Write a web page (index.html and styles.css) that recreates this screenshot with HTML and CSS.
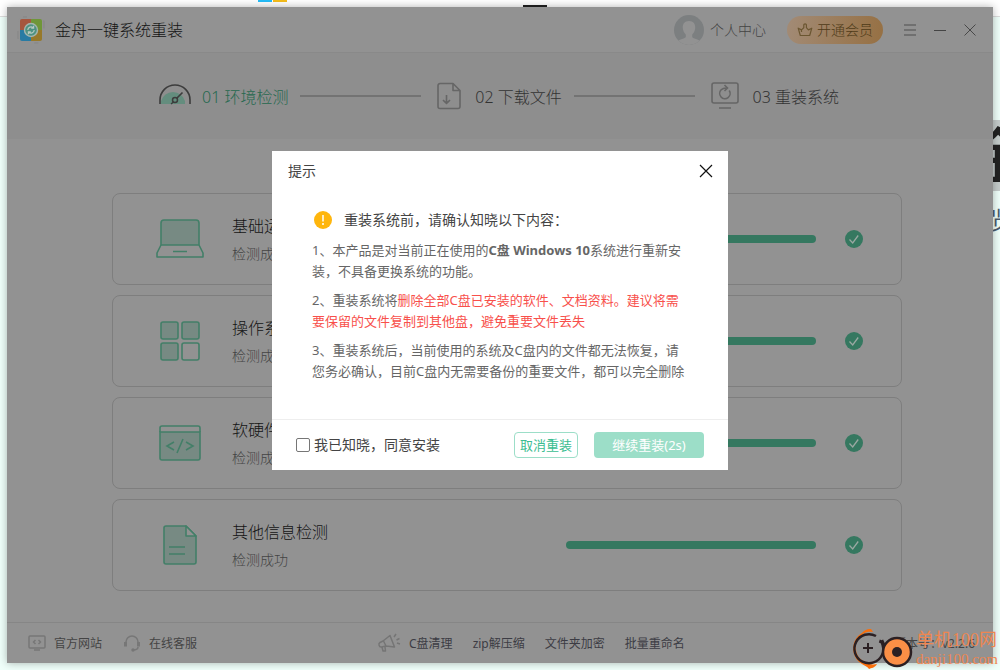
FILE: index.html
```html
<!DOCTYPE html>
<html lang="zh-CN">
<head>
<meta charset="utf-8">
<meta name="viewport" content="width=device-width, initial-scale=1">
<title>金舟一键系统重装</title>
<link rel="stylesheet" href="styles.css">
</head>
<body>
<div class="backdrop" aria-hidden="true">
  <div class="backdrop-top"><i class="tile tile-blue"></i><i class="tile tile-yellow"></i><i class="tile tile-dark"></i></div>
  <div class="backdrop-title">金</div>
  <div class="backdrop-note">览</div>
</div>

<div class="window">
  <header class="titlebar">
    <svg class="logo" width="28" height="28" viewBox="0 0 28 28">
      <rect x="1" y="1" width="26" height="26" rx="5" fill="#929292" stroke="#858585" stroke-dasharray="4 18 8 18"/>
      <path d="M3 5a2 2 0 0 1 2-2h9v11H3z" fill="#a6563e"/><path d="M14 3h9a2 2 0 0 1 2 2v9H14z" fill="#6f9638"/>
      <path d="M3 14h11v11H5a2 2 0 0 1-2-2z" fill="#287ba3"/><path d="M14 14h11v9a2 2 0 0 1-2 2h-9z" fill="#97792a"/>
      <circle cx="14" cy="14" r="6.5" fill="#4d9281" stroke="#a5b5ae" stroke-width="1.4"/>
      <path d="M10.8 14a3.2 3.2 0 0 1 5.4-2.2M17.2 14a3.2 3.2 0 0 1-5.4 2.2M16.6 9.8v2.4h-2.4M11.4 18.2v-2.4h2.4" fill="none" stroke="#b7c9c1" stroke-width="1.2"/>
    </svg>
    <h1 class="app-name">金舟一键系统重装</h1>
    <a class="account" href="#account">
      <svg width="30" height="30" viewBox="0 0 30 30"><defs><clipPath id="avatar"><circle cx="15" cy="15" r="15"/></clipPath></defs>
        <circle cx="15" cy="15" r="15" fill="#7c7f80"/><g clip-path="url(#avatar)" fill="#929292"><path d="M15 6c4.500 0 6.500 3 6.200 7-.2 3-1.400 5-3 6.400v2.400c0 2 7 2.200 8.800 5.200v3H3v-3c1.800-3 8.800-3.200 8.800-5.200v-2.400C10.200 18 9 16 8.800 13 8.500 9 10.500 6 15 6z"/></g></svg>
      <span>个人中心</span>
    </a>
    <button class="vip" type="button">
      <svg width="16" height="16" viewBox="0 0 16 16" fill="none" stroke="#6b5631" stroke-width="1.200" stroke-linejoin="round"><path d="M3.300 13.500 1.200 6.200l3.300 1.700 2.300-2.200V3.200a1.300 1.300 0 1 1 2.600 0v2.500l2 2.200 3.400-1.700-2.100 7.300zM4.500 8v2"/></svg>
      <span>开通会员</span>
    </button>
    <div class="window-controls">
      <button type="button" aria-label="菜单"><svg width="14" height="14" viewBox="0 0 14 14" stroke="#666" stroke-width="1.500"><path d="M1 2h12M1 7h12M1 12h12"/></svg></button>
      <button type="button" aria-label="最小化"><svg width="14" height="14" viewBox="0 0 14 14" stroke="#444"><path d="M1 7.500h12"/></svg></button>
      <button type="button" aria-label="关闭窗口"><svg width="14" height="14" viewBox="0 0 14 14" stroke="#484848"><path d="m1.500 1.500 11 11M12.500 1.500l-11 11"/></svg></button>
    </div>
  </header>

  <ol class="steps">
    <li class="step step-active">
      <svg width="32" height="32" viewBox="0 0 32 32"><path d="M2 24v-3a12.500 12.500 0 0 1 24 0v3z" fill="#648d7e"/><path d="M1 24v-4a15 15 0 0 1 30 0v4M17.500 18.500l6-6" fill="none" stroke="#3c3c3c" stroke-width="1.600"/><circle cx="16" cy="20" r="2.500" fill="#648d7e" stroke="#3c3c3c" stroke-width="1.500"/><path d="M14.500 22 12 24" stroke="#3c3c3c" stroke-width="1.500"/></svg>
      <span>01 环境检测</span>
    </li>
    <li class="step-line" aria-hidden="true"></li>
    <li class="step">
      <svg width="24" height="28" viewBox="0 0 24 28" fill="none" stroke="#666" stroke-width="1.600" stroke-linejoin="round"><path d="M16 1.500H3a2 2 0 0 0-2 2v21a2 2 0 0 0 2 2h18a2 2 0 0 0 2-2V8.500zM16 1.500v7h7M9.500 13v8.500M6 18l3.500 3.500L13 18"/></svg>
      <span>02 下载文件</span>
    </li>
    <li class="step-line" aria-hidden="true"></li>
    <li class="step">
      <svg width="28" height="28" viewBox="0 0 28 28" fill="none" stroke="#666" stroke-width="1.600"><rect x="1" y="1" width="26" height="20" rx="2"/><path d="M8 26h12M18.200 8.500a5.200 5.200 0 1 1-8-.7c1.300-1.300 3-1.800 5-1.800M13.500 3 16.500 6l-3 3"/></svg>
      <span>03 重装系统</span>
    </li>
  </ol>

  <main class="checks">
    <section class="check">
      <svg class="check-icon" width="48" height="48" viewBox="0 0 48 48" stroke="#437f68" stroke-width="1.600" fill="none" stroke-linejoin="round"><path d="M5 30V8a3 3 0 0 1 3-3h32a3 3 0 0 1 3 3v22z" fill="#778a83"/><path d="m5 30-4 8v4h46v-4l-4-8M17 36.500h14"/></svg>
      <div class="check-text"><h2>基础运行检测</h2><p>检测成功</p></div>
      <div class="bar"></div>
      <svg class="tick" width="18" height="18" viewBox="0 0 18 18"><circle cx="9" cy="9" r="9" fill="#357860"/><path d="m4.500 9.500 3.200 3.500 5.500-7.500" fill="none" stroke="#9aa8a2" stroke-width="1.300"/></svg>
    </section>
    <section class="check">
      <svg class="check-icon" width="48" height="48" viewBox="0 0 48 48" stroke="#437f68" stroke-width="1.600" fill="#778a83"><rect x="5" y="5" width="17" height="17" rx="2"/><rect x="26" y="5" width="17" height="17" rx="2"/><rect x="5" y="26" width="17" height="17" rx="2"/><rect x="26" y="26" width="17" height="17" rx="2" fill="none"/></svg>
      <div class="check-text"><h2>操作系统检测</h2><p>检测成功</p></div>
      <div class="bar"></div>
      <svg class="tick" width="18" height="18" viewBox="0 0 18 18"><circle cx="9" cy="9" r="9" fill="#357860"/><path d="m4.500 9.500 3.200 3.500 5.500-7.500" fill="none" stroke="#9aa8a2" stroke-width="1.300"/></svg>
    </section>
    <section class="check">
      <svg class="check-icon" width="48" height="48" viewBox="0 0 48 48" stroke="#437f68" stroke-width="1.600" fill="none"><path d="M4 13h40v26a2 2 0 0 1-2 2H6a2 2 0 0 1-2-2z" fill="#778a83"/><path d="M4 13V9a2 2 0 0 1 2-2h36a2 2 0 0 1 2 2v4M18 23l-7 4 7 4M30 23l7 4-7 4M27 20l-6 14"/></svg>
      <div class="check-text"><h2>软硬件检测</h2><p>检测成功</p></div>
      <div class="bar"></div>
      <svg class="tick" width="18" height="18" viewBox="0 0 18 18"><circle cx="9" cy="9" r="9" fill="#357860"/><path d="m4.500 9.500 3.200 3.500 5.500-7.500" fill="none" stroke="#9aa8a2" stroke-width="1.300"/></svg>
    </section>
    <section class="check">
      <svg class="check-icon" width="48" height="48" viewBox="0 0 48 48" stroke="#437f68" stroke-width="1.600" fill="#778a83" stroke-linejoin="round"><path d="M30 5H10a2 2 0 0 0-2 2v34a2 2 0 0 0 2 2h28a2 2 0 0 0 2-2V15z"/><path d="M30 5v10h10z" fill="#929292"/><path d="M13 26h16M13 33h16"/></svg>
      <div class="check-text"><h2>其他信息检测</h2><p>检测成功</p></div>
      <div class="bar"></div>
      <svg class="tick" width="18" height="18" viewBox="0 0 18 18"><circle cx="9" cy="9" r="9" fill="#357860"/><path d="m4.500 9.500 3.200 3.500 5.500-7.500" fill="none" stroke="#9aa8a2" stroke-width="1.300"/></svg>
    </section>
  </main>

  <footer class="statusbar">
    <a class="site-link" href="#site"><svg width="18" height="18" viewBox="0 0 18 18" fill="none" stroke="#777" stroke-width="1.500"><rect x="1" y="2" width="16" height="12" rx="1"/><path d="M6 16h6M7.500 6 5.500 8l2 2M10.500 6l2 2-2 2"/></svg><span>官方网站</span></a>
    <a class="site-link" href="#support"><svg width="18" height="18" viewBox="0 0 18 18" fill="none" stroke="#777" stroke-width="1.500"><path d="M3 9V8a6 6 0 0 1 12 0v1M15 13c0 2-2 3-5 3"/><path d="M2.500 8v4.500M15.500 8v4.500" stroke-width="3"/><circle cx="10" cy="16" r="1" fill="#777"/></svg><span>在线客服</span></a>
    <nav class="tools">
      <svg width="24" height="20" viewBox="0 0 24 20" fill="none" stroke="#757575" stroke-width="1.500" stroke-linejoin="round"><path d="m6 8 7-5.500 4.500 11.500L9 13M6 8 3 9.500c-2 1-1 5 1.500 4.500L9 13 6.500 8M5 14l1 4h2.500L8 14M17 4l2-3M19.500 7l3-1.500M20 10l3 1"/></svg>
      <a href="#clean">C盘清理</a><a href="#zip">zip解压缩</a><a href="#encrypt">文件夹加密</a><a href="#rename">批量重命名</a>
    </nav>
    <span class="version">版本号：v2.2.6</span>
  </footer>

  <div class="overlay">
    <div class="dialog" role="dialog" aria-modal="true" aria-labelledby="dialog-title">
      <div class="dialog-head">
        <h2 id="dialog-title">提示</h2>
        <button type="button" aria-label="关闭"><svg width="14" height="14" viewBox="0 0 14 14" stroke="#111" stroke-width="1.200"><path d="m1 1 12 12M13 1 1 13"/></svg></button>
      </div>
      <div class="dialog-body">
        <div class="notice"><svg width="18" height="18" viewBox="0 0 18 18"><circle cx="9" cy="9" r="9" fill="#ffb60d"/><path d="M9 4v6.500M9 12v2" stroke="#fff" stroke-width="1.500"/></svg><span>重装系统前，请确认知晓以下内容：</span></div>
        <p>1、本产品是对当前正在使用的<strong>C盘 Windows 10</strong>系统进行重新安装，不具备更换系统的功能。</p>
        <p>2、重装系统将<em>删除全部C盘已安装的软件、文档资料。建议将需要保留的文件复制到其他盘，避免重要文件丢失</em></p>
        <p>3、重装系统后，当前使用的系统及C盘内的文件都无法恢复，请您务必确认，目前C盘内无需要备份的重要文件，都可以完全删除</p>
      </div>
      <div class="dialog-foot">
        <input type="checkbox" id="agree"><label for="agree">我已知晓，同意安装</label>
        <button class="cancel" type="button">取消重装</button>
        <button class="confirm" type="button">继续重装(2s)</button>
      </div>
    </div>
  </div>
</div>

<div class="watermark">
  <svg width="64" height="42" viewBox="0 0 64 42" fill="none">
    <path d="M21 1c-5 0-7 2-9 4A18 18 0 0 0 12 36c3 2 5 2 7 5 2-1 6-1 8-5-5 1-9 0-12-2A16 16 0 0 1 13 6c4-3 8-2 10-2z" fill="#f96f0b"/>
    <path d="M26 8a14.500 14.500 0 1 0 6 19c3-5 1-10-1-14M32 12l4 9M31 12l-1 3M37 19l4-6" stroke="#2b2023" stroke-width="2.500"/>
    <path d="M18 15v10M13 20h10" stroke="#2b2023" stroke-width="2"/>
    <circle cx="47" cy="24" r="14" fill="#fb8f46" stroke="#2b2023" stroke-width="2.500"/><circle cx="47" cy="24" r="5" fill="#2b2023"/>
  </svg>
  <div class="watermark-text"><span>单机100网</span><small>danji100.com</small></div>
</div>
</body>
</html>
```
FILE: styles.css
```css
* { box-sizing: border-box; }

body {
  margin: 0;
  min-height: 100vh;
  padding: 7px;
  display: flex;
  position: relative;
  overflow: hidden;
  background: #effffa;
  color: #444;
  font: 300 14px/20px "Noto Sans", "Noto Sans CJK SC", sans-serif;
}

h1, h2, p, ol { margin: 0; padding: 0; font-size: inherit; font-weight: inherit; }
a { color: inherit; text-decoration: none; }
button { border: 0; padding: 0; background: none; color: inherit; font: inherit; }
svg { display: block; flex: none; }

/* Page behind the application window */
.backdrop { position: absolute; inset: 0; overflow: hidden; }
.backdrop-top { height: 17px; background: #fff; border-bottom: 1px solid #ddd; }
.tile { position: absolute; top: 0; height: 2px; width: 14px; }
.tile-blue { left: 258px; background: #25bdf9; }
.tile-yellow { left: 273px; background: #f5bd1b; }
.tile-dark { left: 523px; top: 5px; width: 24px; background: #222; }
.backdrop-title { position: absolute; top: 120px; right: -28px; background: #c5cccb; color: #222; font-size: 60px; line-height: 71px; font-weight: 500; }
.backdrop-note { position: absolute; top: 206px; right: -14px; color: #4b5c6e; font-size: 24px; line-height: 28px; font-weight: 400; }

.window {
  position: relative;
  flex: 1;
  display: flex;
  flex-direction: column;
  background: #929292;
  box-shadow: 0 0 8px rgba(0, 0, 0, .3);
}

.titlebar { display: flex; align-items: center; height: 46px; padding: 0 16px 0 10px; border-bottom: 1px solid #898989; }
.app-name { margin-left: 10px; color: #141414; font-size: 16px; }
.account { display: flex; align-items: center; gap: 6px; margin-left: auto; color: #444; }
.vip {
  display: flex; align-items: center; justify-content: center; gap: 4px;
  width: 96px; height: 28px; margin-left: 21px; border-radius: 14px;
  background: linear-gradient(100deg, #a28b76, #967043); color: #4f3b18;
}
.window-controls { display: flex; gap: 16px; margin-left: 20px; }

.steps { display: flex; align-items: center; height: 86px; padding: 0 154px 0 152px; background: #8e8e8e; list-style: none; }
.step { display: flex; align-items: center; gap: 14px; color: #333; font-size: 16px; line-height: 22px; white-space: nowrap; }
.step span { padding-top: 2px; }
.step-active { gap: 11px; color: #26694f; }
.step-line { flex: 1; height: 2px; margin: 0 16px 0 12px; background: #737373; }

.checks { flex: 1; display: flex; flex-direction: column; gap: 10px; padding: 54px 91px 31px 105px; }
.check { display: flex; align-items: center; height: 92px; padding: 0 38px 0 43px; border: 1px solid #7e7e7e; border-radius: 8px; }
.check-text { margin-left: 28px; color: #444; }
.check-text h2 { color: #141414; font-size: 16px; line-height: 24px; }
.check-text p { margin-top: 6px; }
.bar { width: 250px; height: 8px; margin-left: auto; border-radius: 4px; background: #357860; }
.tick { margin-left: 29px; }

.statusbar { display: flex; align-items: center; height: 41px; padding: 0 18px 0 21px; border-top: 1px solid #868686; color: #444; font-size: 12px; font-weight: 400; }
.statusbar a { line-height: 20px; }
.statusbar span, .tools a { padding-top: 2px; }
.site-link { display: flex; align-items: center; gap: 8px; margin-right: 21px; }
.tools { display: flex; align-items: center; gap: 20px; margin-left: 159px; color: #3c3c44; }
.tools svg { margin-right: -12px; }
.version { margin-left: auto; }

.overlay { position: absolute; inset: 0; display: flex; justify-content: center; align-items: flex-start; padding-top: 144px; }
.dialog { width: 456px; background: #fff; font-weight: 400; }
.dialog-head { display: flex; align-items: center; justify-content: space-between; height: 40px; padding: 0 15px 0 16px; }
.dialog-body { padding: 18px 38px 37px 40px; color: #666; font-size: 13px; line-height: 21px; }
.notice { display: flex; align-items: center; gap: 12px; padding-left: 2px; margin-bottom: 10px; color: #444; font-size: 14px; }
.dialog-body p + p { margin-top: 8px; }
.dialog-body strong { font-weight: 700; }
.dialog-body em { color: #f8504b; font-style: normal; }
.dialog-foot { display: flex; align-items: center; height: 51px; padding: 0 24px; border-top: 1px solid #eee; }
.dialog-foot input { appearance: none; width: 14px; height: 14px; margin: 0 4px 0 0; border: 1px solid #767676; border-radius: 2px; background: #fff; }
.dialog-foot button { height: 26px; border-radius: 4px; font-size: 13px; }
.cancel { width: 64px; margin-left: auto; border: 1px solid #9cdec8; color: #3bbd91; }
.dialog-foot .confirm { width: 110px; margin-left: 16px; background: #9cdec8; color: #fff; }

.watermark { position: absolute; right: 2px; bottom: 0; display: flex; align-items: center; gap: 2px; color: #ee8650; font-family: "Liberation Serif", "Noto Sans CJK SC", serif; font-weight: 400; pointer-events: none; }
.watermark-text { display: flex; flex-direction: column; font-size: 18px; line-height: 20px; }
.watermark-text small { font-size: 15px; line-height: 18px; }
```
